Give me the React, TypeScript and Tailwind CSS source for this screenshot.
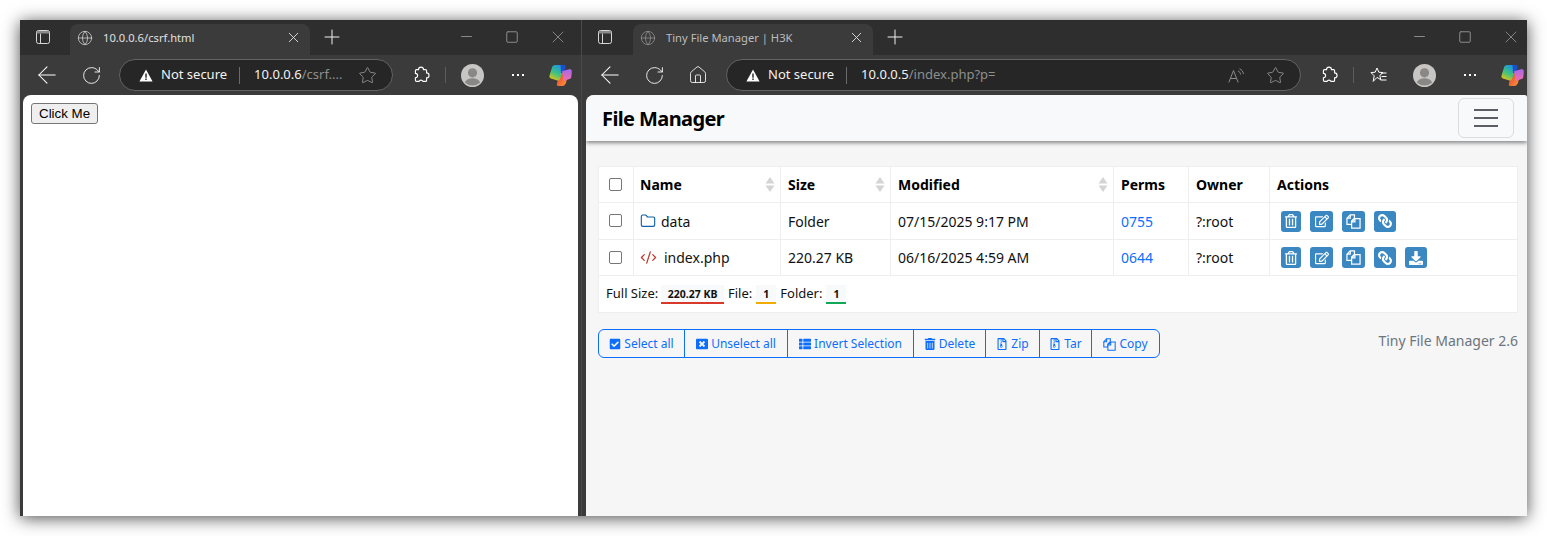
import type { ReactNode } from 'react';
import { Globe, Plus, X, Minus, Square, ArrowLeft, RotateCw, Home, Star, Folder, CodeXml } from 'lucide-react';
import {
  FaCheckSquare,
  FaWindowClose,
  FaThList,
  FaTrashAlt,
  FaRegTrashAlt,
  FaRegEdit,
  FaRegFileArchive,
  FaLink,
  FaDownload,
} from 'react-icons/fa';

function SidebarIcon() {
  return (
    <svg width="14" height="14" viewBox="0 0 14 14" fill="none" stroke="#d8d8d8" strokeWidth="1">
      <rect x="0.5" y="0.5" width="13" height="13" rx="2" />
      <path d="M4.5 3.5V13" />
      <path d="M1 1h12v2.5H1z" fill="#8a8a8a" stroke="none" />
    </svg>
  );
}

function WarningIcon() {
  return (
    <svg width="14" height="13" viewBox="0 0 14 13">
      <path d="M7 0.5 13.6 12.5H0.4z" fill="#fff" />
      <path d="M6.3 4.5h1.4v4.2H6.3zM6.3 9.6h1.4v1.4H6.3z" fill="#222" />
    </svg>
  );
}

function ReadAloudIcon() {
  return (
    <svg width="17" height="15" viewBox="0 0 17 15" fill="none" stroke="#8a8a8a" strokeWidth="1">
      <path d="M0.8 14.5 5.5 2.5l4.7 12M2.4 10.5h6.2" />
      <path d="M10 3c1.5.6 2.4 1.7 2.7 3.5M11.5.8c2.2.9 3.5 2.6 4 5.2" />
    </svg>
  );
}

function FavoritesIcon() {
  return (
    <svg width="17" height="16" viewBox="0 0 17 16" fill="none" stroke="#fff" strokeWidth="1">
      <path d="M7 1 8.8 5.2 13 5.6 9.8 8.4l1 4.3L7 10.4 3.2 14.4l1-5.6L1 5.6l4.2-.4z" />
      <path d="M11 6h5.5M11.5 9.5h5M10.5 13h6" />
    </svg>
  );
}

function ExtensionIcon() {
  return (
    <svg width="18" height="19" viewBox="0 0 16 17" fill="none" stroke="#fff" strokeWidth="1">
      <path d="M5.8 3.2a2.2 2.2 0 0 1 4.4 0h1.8a1 1 0 0 1 1 1v2a2.2 2.2 0 0 1 0 4.4v2a1 1 0 0 1-1 1.2H9.7a1.8 1.8 0 0 0-3.4 0H4a1 1 0 0 1-1-1v-2.3a1.9 1.9 0 0 0 0-3.9V4.2a1 1 0 0 1 1-1z" />
    </svg>
  );
}

function FilesIcon({ fill, size = 15 }: { fill: string; size?: number }) {
  return (
    <svg width={size} height={size} viewBox="0 0 16 16" fill="none" stroke="currentColor" strokeWidth="1.3">
      <path d="M4.5 1H9v3.5L6 7.5V11H1V4.5z" />
      <path d="M4.5 1v3.5H1" />
      <path d="M9.5 5H15v10H6V8.5z" fill={fill} />
      <path d="M9.5 5v3.5H6" />
    </svg>
  );
}

function Avatar() {
  return (
    <svg width="23" height="23" viewBox="0 0 23 23">
      <circle cx="11.5" cy="11.5" r="11.5" fill="#c8c6c4" />
      <circle cx="11.5" cy="8.8" r="4.6" fill="#8a8886" />
      <path d="M3.8 18.5c1.4-2.8 4.3-4.2 7.7-4.2s6.3 1.4 7.7 4.2a11.5 11.5 0 0 1-15.4 0z" fill="#8a8886" />
    </svg>
  );
}

function CopilotLogo({ id }: { id: string }) {
  return (
    <svg width="23" height="23" viewBox="0 0 23 23">
      <defs>
        <linearGradient id={`${id}-a`} x1="0.2" y1="1" x2="0.7" y2="0">
          <stop offset="0" stopColor="#f4c20d" />
          <stop offset="0.45" stopColor="#3fc47e" />
          <stop offset="1" stopColor="#1b8fe8" />
        </linearGradient>
        <linearGradient id={`${id}-b`} x1="0.5" y1="0" x2="0.5" y2="1">
          <stop offset="0" stopColor="#a768ec" />
          <stop offset="1" stopColor="#f26ea8" />
        </linearGradient>
        <linearGradient id={`${id}-c`} x1="0" y1="0" x2="1" y2="1">
          <stop offset="0" stopColor="#e8352f" />
          <stop offset="1" stopColor="#fb9a3c" />
        </linearGradient>
      </defs>
      <path d="M9 15l4-7 2.2 1c-.4 3 .2 5.6 2.6 6.6-.5 3.4-1.8 6.4-4.3 6.4H9.8C7.9 22 7.6 20.8 8 19.4z" fill={`url(#${id}-c)`} />
      <path d="M6 1h8.5c1.4 0 1.8 1 1.3 2L13 9.5 11 15c-.5 1.2-1.4 1.7-2.6 1.4L2 14.5C.6 14 .2 13 .5 11.6L3 3.4C3.4 2 4.4 1 6 1z" fill={`url(#${id}-a)`} />
      <path d="M11.5 1H15c1.3 0 1.8.8 1.6 2L15 9h-3z" fill="#1a4fd0" />
      <path d="M13 7.2 20 5.2c1.6-.4 2.8.6 2.8 2.2l-.4 5c-.1 1.4-.8 2.3-2.1 2.7L15 17z" fill={`url(#${id}-b)`} />
    </svg>
  );
}

function ToolSlot({ children, className = 'w-[44px]' }: { children: ReactNode; className?: string }) {
  return <div className={`flex h-full shrink-0 items-center justify-center ${className}`}>{children}</div>;
}

function Dots() {
  return (
    <div className="flex gap-[3px]">
      <span className="h-[2px] w-[2px] bg-white" />
      <span className="h-[2px] w-[2px] bg-white" />
      <span className="h-[2px] w-[2px] bg-white" />
    </div>
  );
}

function ToolbarSep() {
  return <div className="ml-[2px] h-[16px] w-px shrink-0 bg-[#5c5c5c]" />;
}

function TitleBar({ title, dim, iconClass, captionClass }: {
  title: string;
  dim?: boolean;
  iconClass: string;
  captionClass: string;
}) {
  return (
    <div className="flex h-[35px] shrink-0 items-end bg-[#2e2e2e]">
      <div className={`flex h-full items-center justify-center pb-[1px] ${iconClass}`}>
        <SidebarIcon />
      </div>
      <div className="flex h-[31px] w-[240px] items-center rounded-t-[8px] bg-[#3b3b3b] pr-[10px] pb-[4px] pl-[7px]">
        <Globe size={16} strokeWidth={1.2} className={dim ? 'text-[#8f8f8f]' : 'text-[#d0d0d0]'} />
        <span className={`ml-[10px] flex-1 pt-[1px] text-[11.2px] ${dim ? 'text-[#bdbdbd]' : 'text-[#e0e0e0]'}`}>{title}</span>
        <X size={17} strokeWidth={1.3} className="-mr-[2px] text-[#e0e0e0]" />
      </div>
      <div className="flex h-full w-[44px] items-center justify-center pb-[1px]">
        <Plus size={24} strokeWidth={1} className="text-[#f0f0f0]" />
      </div>
      <div className={`flex h-full flex-1 items-center justify-end ${captionClass}`}>
        <div className="flex w-[46px] justify-center"><Minus size={17} strokeWidth={1.4} className="-translate-y-[1px] text-[#8c8c8c]" /></div>
        <div className="flex w-[46px] justify-center"><Square size={14} strokeWidth={1.7} className="-translate-y-[1px] text-[#8c8c8c]" /></div>
        <div className="flex w-[46px] justify-center"><X size={20} strokeWidth={1.1} className="-translate-y-[1px] text-[#8c8c8c]" /></div>
      </div>
    </div>
  );
}

function Pill({ host, path, className, hostClass, children }: {
  host: string;
  path: string;
  className: string;
  hostClass: string;
  children: ReactNode;
}) {
  return (
    <div className={`flex h-[32px] shrink-0 items-center rounded-full border border-[#636363] bg-[#262626] ${className}`}>
      <WarningIcon />
      <span className="ml-[8px] text-[13px] text-[#f2f2f2]">Not secure</span>
      <div className="mr-[11px] ml-[12px] h-[17px] w-px bg-[#6a6a6a]" />
      <span className={`text-[13px] whitespace-nowrap text-[#f2f2f2] ${hostClass}`}>
        {host}
        <span className="text-[#8e8e8e]">{path}</span>
      </span>
      <div className="flex-1" />
      {children}
    </div>
  );
}

function SortArrows() {
  return (
    <svg width="10" height="15" viewBox="0 0 10 15" className="-mr-[2px] shrink-0">
      <path d="M5 0 9.5 6.5H.5z" fill="#d4d4d4" />
      <path d="M5 15 .5 8.5h9z" fill="#d4d4d4" />
    </svg>
  );
}

function Check() {
  return <span className="block h-[13px] w-[13px] rounded-[2px] border border-[#767676] bg-white" />;
}

function ActionIcons({ download }: { download?: boolean }) {
  const cls = 'flex h-[21px] items-center justify-center rounded-[3px] bg-[#3a87c2] text-[14px] text-white';
  return (
    <div className="flex gap-[9px] pl-[4px]">
      <span className={`${cls} w-[20px]`}><FaRegTrashAlt /></span>
      <span className={`${cls} w-[23px]`}><FaRegEdit /></span>
      <span className={`${cls} w-[23px]`}><FilesIcon fill="#3a87c2" /></span>
      <span className={`${cls} w-[22px]`}><FaLink className="-scale-x-100" /></span>
      {download && <span className={`${cls} w-[22px]`}><FaDownload /></span>}
    </div>
  );
}

function Badge({ children, bar, wide }: { children: ReactNode; bar: string; wide?: boolean }) {
  return (
    <span className={`inline-flex h-[19px] items-center border-b-2 bg-[#f8f9fa] pt-[2px] text-[10.5px] font-bold ${wide ? 'mr-[4px] ml-[3px] px-[6.5px]' : 'mx-[4px] px-[7px]'} ${bar}`}>
      {children}
    </span>
  );
}

function ToolButton({ icon, label, width }: { icon: ReactNode; label: string; width: string }) {
  return (
    <div className={`flex h-full items-center justify-center gap-[3px] border-l border-[#0d6efd] pt-[1px] first:border-l-0 ${width}`}>
      <span className="text-[12px]">{icon}</span>
      <span>{label}</span>
    </div>
  );
}

const headCell = 'border border-[#eeeeee] px-[7px] text-left font-bold';
const bodyCell = 'border border-[#eeeeee] px-[7px]';

function FileManager() {
  return (
    <div className="flex min-h-0 flex-1 flex-col overflow-hidden rounded-tl-[8px] rounded-tr-[3px] bg-[#f6f6f6] font-['Noto_Sans',sans-serif] text-[14px] text-[#111]">
      <div className="flex h-[46px] shrink-0 items-center justify-between bg-[#f8f9fa] pr-[13px] pl-[16px] shadow-[0_2px_4px_rgba(0,0,0,0.45)]">
        <span className="pt-[1px] text-[20px] font-bold tracking-[-0.6px] text-black">File Manager</span>
        <div className="flex h-[40px] w-[56px] flex-col items-center justify-center gap-[6px] rounded-[6px] border border-[#dcdcdc]">
          <span className="h-[2px] w-[24px] bg-[#5b5f65]" />
          <span className="h-[2px] w-[24px] bg-[#5b5f65]" />
          <span className="h-[2px] w-[24px] bg-[#5b5f65]" />
        </div>
      </div>

      <div className="px-[12px] pt-[25px]">
        <table className="w-[919px] table-fixed border-collapse bg-white">
          <colgroup>
            <col className="w-[35px]" />
            <col className="w-[147px]" />
            <col className="w-[110px]" />
            <col className="w-[223px]" />
            <col className="w-[75px]" />
            <col className="w-[81px]" />
            <col className="w-[248px]" />
          </colgroup>
          <thead>
            <tr className="h-[36px] text-black">
              <th className={headCell}><div className="flex justify-center pr-[2px]"><Check /></div></th>
              <th className={`${headCell} pl-[6px]`}><div className="flex items-center justify-between">Name<SortArrows /></div></th>
              <th className={headCell}><div className="flex items-center justify-between">Size<SortArrows /></div></th>
              <th className={headCell}><div className="flex items-center justify-between">Modified<SortArrows /></div></th>
              <th className={headCell}>Perms</th>
              <th className={headCell}>Owner</th>
              <th className={headCell}>Actions</th>
            </tr>
          </thead>
          <tbody>
            <tr className="h-[37px]">
              <td className={bodyCell}><div className="-mt-[1px] flex justify-center pr-[2px]"><Check /></div></td>
              <td className={`${bodyCell} pl-[6px]`}>
                <div className="flex items-center gap-[5px]"><Folder size={16} strokeWidth={1.7} className="text-[#0d62a8]" /><span>data</span></div>
              </td>
              <td className={bodyCell}>Folder</td>
              <td className={bodyCell}>07/15/2025 9:17 PM</td>
              <td className={`${bodyCell} text-[#0d6efd]`}>0755</td>
              <td className={bodyCell}>?:root</td>
              <td className={bodyCell}><ActionIcons /></td>
            </tr>
            <tr className="h-[36px]">
              <td className={bodyCell}><div className="flex justify-center pr-[2px]"><Check /></div></td>
              <td className={`${bodyCell} pl-[6px]`}>
                <div className="flex items-center gap-[7px]"><CodeXml size={17} strokeWidth={1.8} className="text-[#c0392b]" /><span>index.php</span></div>
              </td>
              <td className={bodyCell}>220.27 KB</td>
              <td className={bodyCell}>06/16/2025 4:59 AM</td>
              <td className={`${bodyCell} text-[#0d6efd]`}>0644</td>
              <td className={bodyCell}>?:root</td>
              <td className={bodyCell}><ActionIcons download /></td>
            </tr>
            <tr className="h-[37px]">
              <td colSpan={7} className={`${bodyCell} text-[13px]`}>
                Full Size:<Badge wide bar="border-[#d9392b]">220.27 KB</Badge>File:<Badge bar="border-[#f0ad00]">1</Badge>Folder:<Badge bar="border-[#0fa958]">1</Badge>
              </td>
            </tr>
          </tbody>
        </table>

        <div className="mt-[16px] flex w-[920px] items-start justify-between">
          <div className="flex h-[29px] w-[562px] rounded-[6px] border border-[#0d6efd] text-[12px] text-[#0d6efd]">
            <ToolButton icon={<FaCheckSquare />} label="Select all" width="w-[85px]" />
            <ToolButton icon={<FaWindowClose />} label="Unselect all" width="w-[103px]" />
            <ToolButton icon={<FaThList />} label="Invert Selection" width="w-[126px]" />
            <ToolButton icon={<FaTrashAlt />} label="Delete" width="w-[72px]" />
            <ToolButton icon={<FaRegFileArchive />} label="Zip" width="w-[54px]" />
            <ToolButton icon={<FaRegFileArchive />} label="Tar" width="w-[52px]" />
            <ToolButton icon={<FilesIcon fill="#f6f6f6" size={13} />} label="Copy" width="w-[68px]" />
          </div>
          <span className="pt-[1px] text-[#6c757d]">Tiny File Manager 2.6</span>
        </div>
      </div>
    </div>
  );
}

export default function App() {
  return (
    <div className="h-[536px] w-[1547px] overflow-hidden bg-white p-[20px] font-['Noto_Sans',sans-serif]">
      <div className="flex h-[496px] w-[1507px] shadow-[0_2px_16px_rgba(0,0,0,0.7)]">
        {/* first window */}
        <div className="flex w-[561px] shrink-0 flex-col bg-[#3b3b3b]">
          <TitleBar title="10.0.0.6/csrf.html" iconClass="w-[50px] pr-[4px]" captionClass="" />
          <div className="flex h-[40px] shrink-0 items-center pl-[5px]">
            <ToolSlot><ArrowLeft size={28} strokeWidth={0.9} className="text-white" /></ToolSlot>
            <ToolSlot><RotateCw size={21} strokeWidth={1} className="text-white" /></ToolSlot>
            <Pill host="10.0.0.6" path="/csrf...." hostClass="ml-[3px]" className="ml-[6px] w-[274px] pr-[15px] pl-[19px]">
              <Star size={19} strokeWidth={1} className="text-[#a0a0a0]" />
            </Pill>
            <ToolSlot className="ml-[6px] w-[44px]"><ExtensionIcon /></ToolSlot>
            <ToolbarSep />
            <ToolSlot className="ml-[4px] w-[44px]"><Avatar /></ToolSlot>
            <ToolSlot className="ml-[2px] w-[44px]"><Dots /></ToolSlot>
            <ToolSlot className="w-[41px]"><CopilotLogo id="one" /></ToolSlot>
          </div>
          <div className="mx-[3px] min-h-0 flex-1 rounded-t-[8px] bg-white p-[8px]">
            <button className="block h-[21px] rounded-[3px] border border-[#767676] bg-[#efefef] px-[7px] font-['Liberation_Sans',sans-serif] text-[13.33px] text-black">
              Click Me
            </button>
          </div>
        </div>

        {/* second window */}
        <div className="flex min-w-0 flex-1 flex-col border-l border-[#4a4a4a] bg-[#3b3b3b]">
          <TitleBar title="Tiny File Manager | H3K" dim iconClass="w-[51px] pr-[6px]" captionClass="-mr-[7px]" />
          <div className="flex h-[40px] shrink-0 items-center pl-[6px]">
            <ToolSlot><ArrowLeft size={28} strokeWidth={0.9} className="text-white" /></ToolSlot>
            <ToolSlot><RotateCw size={21} strokeWidth={1} className="text-white" /></ToolSlot>
            <ToolSlot><Home size={20} strokeWidth={1} className="text-white" /></ToolSlot>
            <Pill host="10.0.0.5" path="/index.php?p=" hostClass="ml-[3px]" className="ml-[6px] w-[575px] pr-[15px] pl-[19px]">
              <ReadAloudIcon />
              <Star size={19} strokeWidth={1} className="ml-[21px] text-[#a0a0a0]" />
            </Pill>
            <ToolSlot className="ml-[6px] w-[44px]"><ExtensionIcon /></ToolSlot>
            <ToolbarSep />
            <ToolSlot className="ml-[2px] w-[44px]"><FavoritesIcon /></ToolSlot>
            <ToolSlot className="ml-[2px] w-[44px]"><Avatar /></ToolSlot>
            <ToolSlot className="ml-[2px] w-[44px]"><Dots /></ToolSlot>
            <ToolSlot className="w-[40px]"><CopilotLogo id="two" /></ToolSlot>
          </div>
          <div className="ml-[4px] flex min-h-0 flex-1 flex-col">
            <FileManager />
          </div>
        </div>
      </div>
    </div>
  );
}
